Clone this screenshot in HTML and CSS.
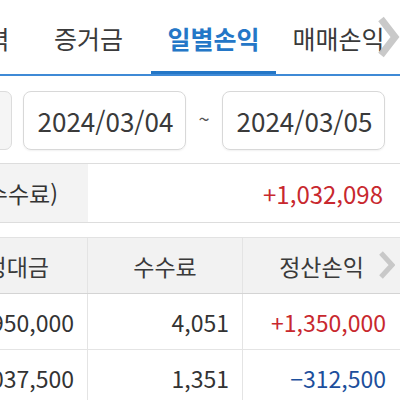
FILE: index.html
```html
<!DOCTYPE html>
<html lang="ko">
<head>
<meta charset="utf-8">
<title>일별손익</title>
<link rel="stylesheet" href="styles.css">
</head>
<body>
<div class="screen">
  <nav class="tabs">
    <div class="tab">거래이력</div>
    <div class="tab">증거금</div>
    <div class="tab active">일별손익</div>
    <div class="tab">매매손익</div>
    <svg class="tab-more" width="26" height="44" viewBox="0 0 26 44"><polyline points="5,4 19,22 5,40" fill="none" stroke="#c4c4c4" stroke-width="7" stroke-linejoin="miter" stroke-linecap="butt"/></svg>
  </nav>
  <div class="dates">
    <div class="date-prev"></div>
    <div class="date">2024/03/04</div>
    <span class="tilde">~</span>
    <div class="date">2024/03/05</div>
  </div>
  <div class="summary">
    <div class="sum-label">실현손익(수수료)</div>
    <div class="sum-value up">+1,032,098</div>
  </div>
  <div class="grid">
    <div class="row head">
      <div class="cell">약정대금</div>
      <div class="cell">수수료</div>
      <div class="cell">정산손익</div>
      <svg class="head-more" width="16" height="28" viewBox="0 0 16 28"><polyline points="2,2 13,14 2,26" fill="none" stroke="#c8c8c8" stroke-width="5"/></svg>
    </div>
    <div class="row">
      <div class="cell">1,950,000</div>
      <div class="cell">4,051</div>
      <div class="cell up">+1,350,000</div>
    </div>
    <div class="row">
      <div class="cell">2,037,500</div>
      <div class="cell">1,351</div>
      <div class="cell down">−312,500</div>
    </div>
  </div>
</div>
</body>
</html>
```
FILE: styles.css
```css
html, body {
  margin: 0;
  padding: 0;
  background: #ffffff;
}
body {
  width: 400px;
  height: 400px;
  overflow: hidden;
  font-family: "Noto Sans CJK KR", "Noto Sans", sans-serif;
  color: #333333;
}
.screen {
  width: 400px;
}
.tabs {
  position: relative;
  display: flex;
  margin-left: -99px;
  border-bottom: 2px solid #3f8ad6;
}
.tab {
  flex: 0 0 125px;
  height: 72px;
  padding-top: 2px;
  display: flex;
  align-items: center;
  justify-content: center;
  font-size: 25px;
  color: #3a3a3a;
  white-space: nowrap;
}
.tab.active {
  color: #2477c7;
  font-weight: bold;
  box-shadow: inset 0 -3px 0 #2477c7;
}
.tab-more {
  position: absolute;
  right: -2px;
  top: 15px;
  opacity: 0.9;
}
.dates {
  display: flex;
  align-items: center;
  margin-left: -48px;
  padding: 15px 0 13px;
  border-bottom: 1px solid #dddddd;
}
.date-prev {
  width: 58px;
  height: 57px;
  background: #f5f5f5;
  border: 1px solid #dcdcdc;
  border-radius: 7px;
  margin-right: 11px;
}
.date {
  width: 159px;
  height: 57px;
  border: 1px solid #d8d8d8;
  border-radius: 8px;
  box-shadow: 0 1px 2px rgba(0,0,0,0.06);
  display: flex;
  align-items: center;
  justify-content: center;
  font-size: 26px;
  color: #3a3a3a;
  padding-left: 2px;
}
.tilde {
  width: 36px;
  text-align: center;
  font-size: 20px;
  color: #555555;
  margin-top: -4px;
}
.summary {
  display: flex;
  margin-left: -80px;
  height: 58px;
  border-bottom: 1px solid #dddddd;
}
.sum-label {
  flex: 0 0 168px;
  background: #f3f3f3;
  display: flex;
  align-items: center;
  justify-content: flex-end;
  padding-right: 30px;
  box-sizing: border-box;
  font-size: 23px;
  white-space: nowrap;
  overflow: hidden;
}
.sum-value {
  flex: 1;
  display: flex;
  align-items: center;
  justify-content: flex-end;
  padding-right: 17px;
  font-size: 24px;
}
.up { color: #c8282e; }
.down { color: #1d4f9c; }
.grid {
  margin-top: 14px;
  margin-left: -80px;
  border-top: 1px solid #e2e2e2;
}
.row {
  position: relative;
  display: grid;
  grid-template-columns: 168px 155px 157px;
  height: 55px;
  border-bottom: 1px solid #e4e4e4;
}
.row.head {
  background: #f2f2f2;
  border-bottom: 1px solid #d4d4d4;
}
.cell {
  display: flex;
  align-items: center;
  justify-content: flex-end;
  padding-right: 13px;
  font-size: 23px;
  white-space: nowrap;
  border-right: 1px solid #e4e4e4;
}
.cell:nth-child(3) {
  border-right: none;
  padding-right: 14px;
}
.head .cell {
  justify-content: center;
  padding-right: 0;
  font-size: 23px;
  color: #3a3a3a;
}
.head .cell:first-child {
  justify-content: flex-end;
  padding-right: 38px;
}
.head-more {
  position: absolute;
  right: 5px;
  top: 13px;
}
```
